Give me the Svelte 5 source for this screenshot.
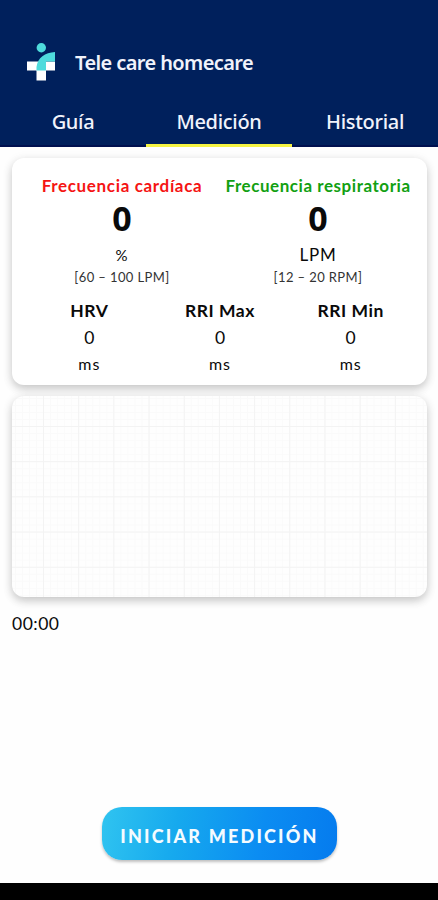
<script lang="ts">
	let activeTab = $state('Medición')

	const tabs = ['Guía', 'Medición', 'Historial']

	const vitals = [
		{ kind: 'heart', label: 'Frecuencia cardíaca', value: 0, unit: '%', range: '[60 – 100 LPM]' },
		{ kind: 'breath', label: 'Frecuencia respiratoria', value: 0, unit: 'LPM', range: '[12 – 20 RPM]' }
	]

	const intervals = [
		{ label: 'HRV', value: 0 },
		{ label: 'RRI Max', value: 0 },
		{ label: 'RRI Min', value: 0 }
	]
</script>

<div class="screen">
	<header>
		<div class="brand">
			<svg class="logo" viewBox="0 0 28 38" aria-hidden="true">
				<path d="M0 18.5h28v9h-9v10H9.500v-10H0z" fill="#fff" />
				<path d="M9.500 27.500V24C10.500 14.500 18 9.500 28 9v9.500h-9v9z" fill="#4edbdc" />
				<circle cx="14.300" cy="4.700" r="4.700" fill="#4edbdc" />
			</svg>
			<h1>Tele care homecare</h1>
		</div>
		<nav>
			{#each tabs as tab}
				<button class="tab" class:active={tab === activeTab} onclick={() => (activeTab = tab)}>
					<span>{tab}</span>
				</button>
			{/each}
		</nav>
	</header>

	<main>
		<section class="card readings">
			<div class="vitals">
				{#each vitals as vital}
					<div class="vital {vital.kind}">
						<h2>{vital.label}</h2>
						<strong>{vital.value}</strong>
						<span class="unit">{vital.unit}</span>
						<span class="range">{vital.range}</span>
					</div>
				{/each}
			</div>
			<div class="intervals">
				{#each intervals as item}
					<div class="interval">
						<h3>{item.label}</h3>
						<span class="number">{item.value}</span>
						<span class="ms">ms</span>
					</div>
				{/each}
			</div>
		</section>

		<section class="card chart" aria-label="ECG"></section>

		<p class="timer">00:00</p>

		<button class="start">INICIAR MEDICIÓN</button>
	</main>

	<div class="system-bar"></div>
</div>

<style>
	:global(body) {
		margin: 0;
		background: #fff;
	}

	.screen {
		display: flex;
		flex-direction: column;
		height: 900px;
		overflow: hidden;
		background: #fefefe;
		color: #0a0a0a;
		font-family: Lato, sans-serif;
	}

	h1,
	h2,
	h3,
	p {
		margin: 0;
	}

	button {
		border: 0;
		padding: 0;
		cursor: pointer;
	}

	header {
		display: flex;
		flex-direction: column;
		justify-content: flex-end;
		height: 147px;
		flex-shrink: 0;
		background: #00205c;
		color: #f1f3fb;
		font-family: 'Noto Sans', sans-serif;
	}

	.brand {
		display: flex;
		align-items: center;
		gap: 20px;
		height: 38px;
		padding-left: 27px;
		margin-bottom: 16px;
	}

	.logo {
		width: 28px;
		height: 38px;
	}

	h1 {
		padding-top: 2px;
		font-size: 20px;
		font-weight: 600;
		line-height: 38px;
		letter-spacing: -.6px;
		white-space: nowrap;
	}

	nav {
		display: flex;
		height: 50px;
	}

	.tab {
		flex: 1;
		box-sizing: border-box;
		padding-top: 2px;
		border-bottom: 2px solid #00104f;
		background: none;
		color: inherit;
		font: 500 20px/46px 'Noto Sans', sans-serif;
		letter-spacing: -.3px;
	}
	.tab.active {
		border-bottom: 3px solid #f5f443;
		line-height: 45px;
	}

	main {
		display: flex;
		flex-direction: column;
		flex: 1;
		padding: 11px 11px 0 12px;
	}

	.card {
		box-sizing: border-box;
		flex-shrink: 0;
		border-radius: 12px;
		background: #fff;
		box-shadow: 0 4px 8px rgba(0, 0, 0, .17), 0 2px 12px rgba(0, 0, 0, .08);
	}

	.readings {
		height: 227px;
		padding: 18px 11px 0 12px;
	}

	.vitals,
	.intervals {
		display: flex;
	}

	.vital,
	.interval {
		display: flex;
		flex-direction: column;
		align-items: center;
		flex: 1 1 0;
		min-width: 0;
		white-space: nowrap;
	}

	h2 {
		font-size: 17px;
		font-weight: 700;
		line-height: 20px;
		letter-spacing: .65px;
	}
	.heart h2 {
		color: #f51414;
	}
	.breath h2 {
		letter-spacing: .55px;
		color: #12a012;
	}

	strong {
		font: 700 34px/44px 'Noto Sans', sans-serif;
	}

	.unit {
		font-size: 17px;
		line-height: 30px;
		letter-spacing: .8px;
	}
	.heart .unit {
		font-size: 15px;
	}

	.range {
		font-size: 13px;
		line-height: 14px;
		letter-spacing: .4px;
		color: #333;
	}

	.intervals {
		margin-top: 13px;
	}

	h3 {
		font-size: 17.5px;
		font-weight: 700;
		line-height: 28px;
		letter-spacing: .5px;
	}

	.number {
		font-size: 17.5px;
		line-height: 26px;
	}

	.ms {
		font-size: 16px;
		line-height: 25px;
		letter-spacing: 1px;
	}

	.chart {
		height: 201px;
		margin-top: 11px;
		background-color: #fefefe;
		background-image:
			linear-gradient(to right, #f3f3f3 1px, transparent 1px),
			linear-gradient(to bottom, #f3f3f3 1px, transparent 1px),
			linear-gradient(to right, #fafafa 1px, transparent 1px),
			linear-gradient(to bottom, #fafafa 1px, transparent 1px);
		background-size: 35.2px 35.2px, 35.2px 35.2px, 7.04px 7.04px, 7.04px 7.04px;
		background-position: 31px 30px, 31px 30px, 3px 2px, 3px 2px;
	}

	.timer {
		margin-top: 16px;
		font-size: 17.5px;
		line-height: 22px;
		letter-spacing: .5px;
	}

	.start {
		align-self: center;
		width: 235px;
		height: 53px;
		margin-top: auto;
		margin-bottom: 23px;
		border-radius: 20px;
		background: linear-gradient(100deg, #30c4f0 0%, #16a9ee 32%, #0b8cf2 68%, #057bee 100%);
		box-shadow: 0 2px 3px rgba(0, 0, 0, .25);
		color: #f4fbff;
		font: 900 18px/59px Lato, sans-serif;
		letter-spacing: 2.2px;
		white-space: nowrap;
	}

	.system-bar {
		height: 17px;
		flex-shrink: 0;
		background: #000;
	}
</style>
